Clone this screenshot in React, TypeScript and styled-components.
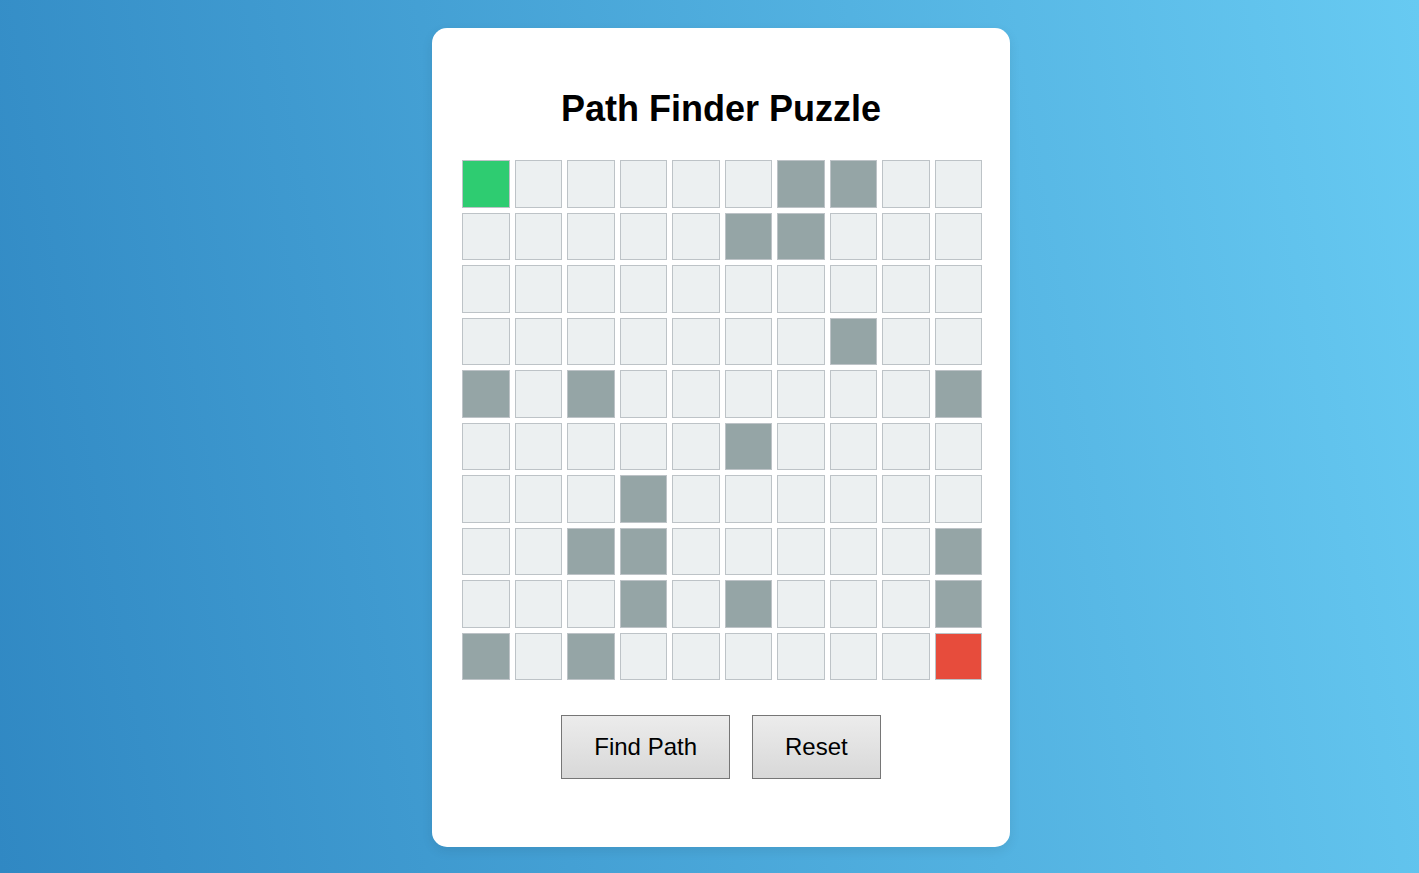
import React from "react";
import styled, { createGlobalStyle } from "styled-components";

const GlobalStyle = createGlobalStyle`
  html, body {
    margin: 0;
    padding: 0;
    height: 100%;
  }
  body {
    font-family: "Liberation Sans", Arial, sans-serif;
    background: linear-gradient(80deg, #3088c3 0%, #67caf2 100%);
    min-height: 100vh;
  }
`;

const Page = styled.div`
  min-height: 873px;
  display: flex;
  justify-content: center;
  align-items: flex-start;
  padding: 28px 0 0 23px;
  box-sizing: border-box;
`;

const Card = styled.div`
  width: 578px;
  height: 819px;
  box-sizing: border-box;
  background: #ffffff;
  border-radius: 15px;
  padding: 60px 0 0 30px;
  display: flex;
  flex-direction: column;
  align-items: flex-start;
  box-shadow: 0 4px 12px rgba(0, 0, 0, 0.08);
`;

const Title = styled.h1`
  margin: 0;
  width: 518px;
  text-align: center;
  font-size: 36px;
  line-height: 41px;
  font-weight: bold;
  color: #000;
`;

const Grid = styled.div`
  margin-top: 31px;
  width: 520px;
  display: grid;
  grid-template-columns: repeat(10, 1fr);
  grid-auto-rows: 47.5px;
  gap: 5px;
`;

type Kind = "empty" | "wall" | "start" | "end";

const colors: Record<Kind, string> = {
  empty: "#ecf0f1",
  wall: "#95a5a6",
  start: "#2ecc71",
  end: "#e74c3c",
};

const Cell = styled.div<{ $kind: Kind }>`
  box-sizing: border-box;
  border: 1px solid #bdc3c7;
  background: ${(p) => colors[p.$kind]};
`;

const Controls = styled.div`
  margin-top: 35px;
  width: 518px;
  display: flex;
  justify-content: center;
  gap: 22px;
`;

const Button = styled.button`
  font-family: "Liberation Sans", Arial, sans-serif;
  font-size: 24px;
  line-height: 28px;
  padding: 17px 32px;
  color: #000;
  border: 1px solid #767676;
  border-radius: 0;
  background: linear-gradient(#ececec, #d8d8d8);
  cursor: pointer;
`;

const walls: Record<number, number[]> = {
  0: [6, 7],
  1: [5, 6],
  2: [],
  3: [7],
  4: [0, 2, 9],
  5: [5],
  6: [3],
  7: [2, 3, 9],
  8: [3, 5, 9],
  9: [0, 2],
};

const kindOf = (r: number, c: number): Kind => {
  if (r === 0 && c === 0) return "start";
  if (r === 9 && c === 9) return "end";
  return walls[r].includes(c) ? "wall" : "empty";
};

export default function App() {
  const cells = [];
  for (let r = 0; r < 10; r++) {
    for (let c = 0; c < 10; c++) {
      cells.push(<Cell key={`${r}-${c}`} $kind={kindOf(r, c)} />);
    }
  }
  return (
    <>
      <GlobalStyle />
      <Page>
        <Card>
          <Title>Path Finder Puzzle</Title>
          <Grid>{cells}</Grid>
          <Controls>
            <Button>Find Path</Button>
            <Button>Reset</Button>
          </Controls>
        </Card>
      </Page>
    </>
  );
}
